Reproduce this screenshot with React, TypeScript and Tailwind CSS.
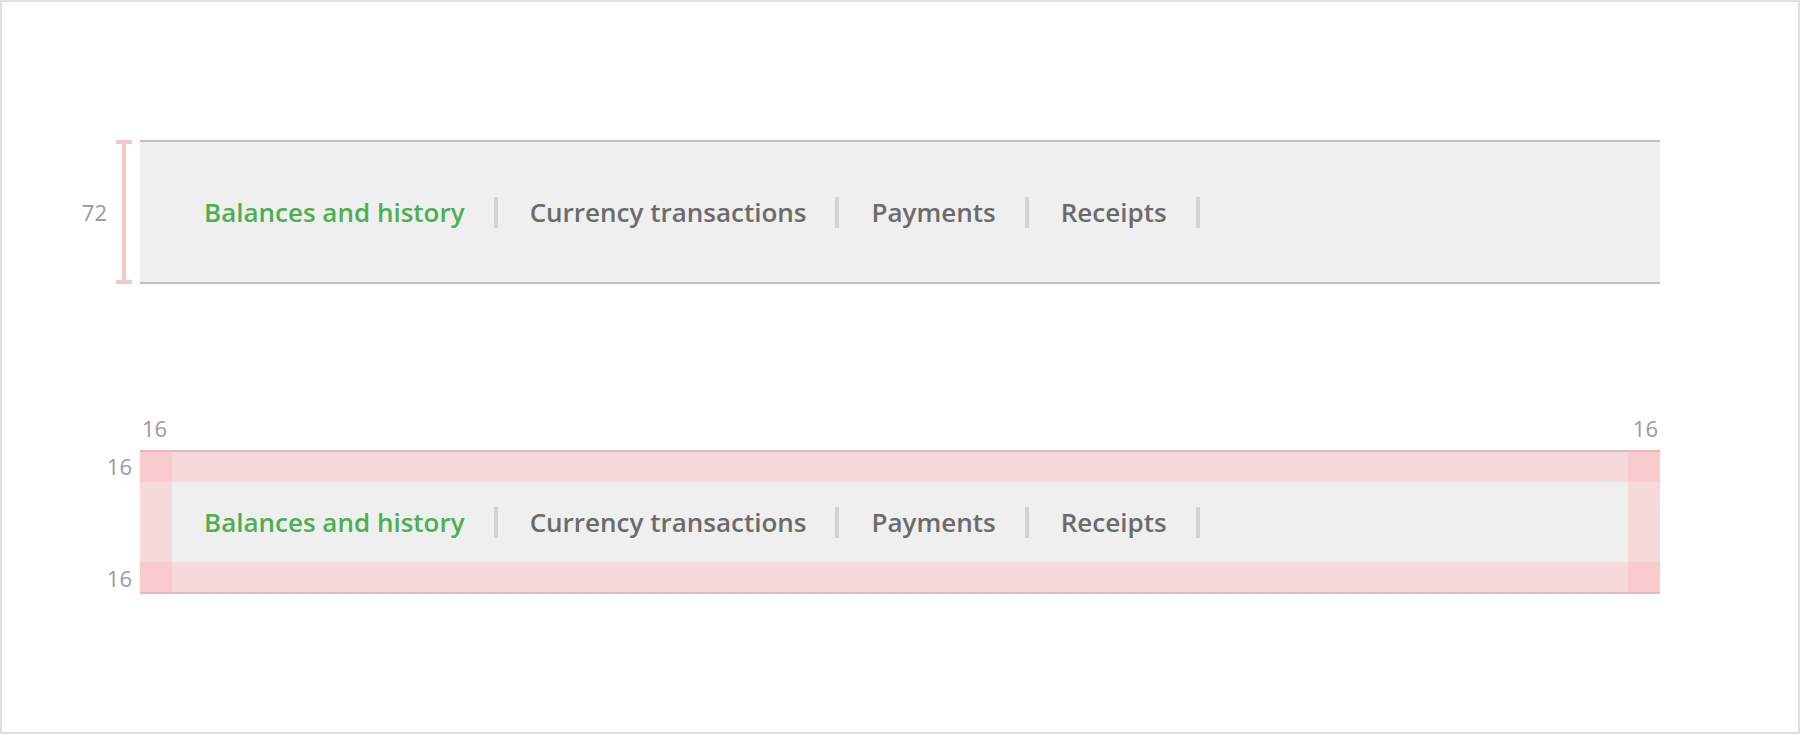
import React from 'react';

const tabs = ['Balances and history', 'Currency transactions', 'Payments', 'Receipts'];

const TabBar: React.FC = () => (
  <div className="flex items-center h-full px-8">
    {tabs.map((t, i) => (
      <div key={t} className="flex items-center">
        <span
          className={`pl-8 pr-[29px] text-[26px] font-semibold leading-none ${i === 0 ? 'text-[#4caf50]' : 'text-[#6b6b6b]'}`}
        >
          {t}
        </span>
        <span className="w-[4px] h-[31px] bg-[#d2d2d2]" />
      </div>
    ))}
  </div>
);

const App: React.FC = () => {
  return (
    <div
      className="w-[1800px] h-[734px] border-2 border-[#e0e0e0] bg-white flex flex-col"
      style={{ fontFamily: '"Open Sans", "Liberation Sans", sans-serif' }}
    >
      {/* Top: bar with height annotation */}
      <div className="flex items-stretch mt-[138px]">
        <div className="w-[138px] flex items-center justify-end">
          <span className="text-[22px] text-[#9a9a9a] mr-[9px]">72</span>
          <div className="w-[16px] h-[144px] flex flex-col items-center mr-[8px]">
            <div className="w-[16px] h-[4px] bg-[#f9c5c5]" />
            <div className="w-[4px] flex-1 bg-[#f9c5c5]" />
            <div className="w-[16px] h-[4px] bg-[#f9c5c5]" />
          </div>
        </div>
        <div className="w-[1520px] h-[144px] bg-[#efefef] border-y-2 border-[#c0c0c0]">
          <TabBar />
        </div>
      </div>

      {/* Bottom: bar with padding annotation */}
      <div className="flex mt-[129px] pl-[138px]">
        <div className="w-[1520px] flex justify-between px-[2px] text-[22px] text-[#9a9a9a] leading-[30px]">
          <span>16</span>
          <span>16</span>
        </div>
      </div>
      <div className="flex items-stretch mt-[7px]">
        <div className="w-[138px] flex flex-col items-end pr-[8px] text-[22px] text-[#9a9a9a]">
          <div className="h-[32px] flex items-center">16</div>
          <div className="h-[80px]" />
          <div className="h-[32px] flex items-center">16</div>
        </div>
        <div className="relative w-[1520px] h-[144px] bg-[#efefef] border-y-2 border-[#c0c0c0]">
          <TabBar />
          {/* padding overlays */}
          <div className="absolute -top-[2px] left-0 right-0 h-[32px] bg-[rgba(255,180,185,0.375)]" />
          <div className="absolute -bottom-[2px] left-0 right-0 h-[32px] bg-[rgba(255,180,185,0.375)]" />
          <div className="absolute -top-[2px] -bottom-[2px] left-0 w-[32px] bg-[rgba(255,180,185,0.375)]" />
          <div className="absolute -top-[2px] -bottom-[2px] right-0 w-[32px] bg-[rgba(255,180,185,0.375)]" />
        </div>
      </div>
    </div>
  );
};

export default App;
